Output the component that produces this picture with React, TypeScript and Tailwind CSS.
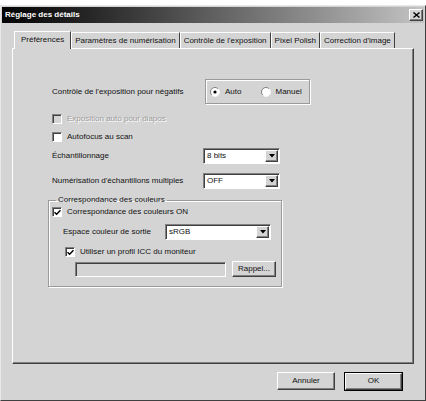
import React from 'react';

const raised =
  'border border-t-white border-l-white border-r-[#404040] border-b-[#404040] shadow-[inset_-1px_-1px_0_#808080]';
const sunken =
  'border border-t-[#808080] border-l-[#808080] border-r-white border-b-white shadow-[inset_1px_1px_0_#404040]';

const CheckBox = ({ checked, disabled }: { checked?: boolean; disabled?: boolean }) => (
  <span
    className={`w-[10px] h-[10px] shrink-0 flex items-center justify-center ${sunken} ${
      disabled ? 'bg-[#d4d4d4]' : 'bg-white'
    }`}
  >
    {checked && (
      <svg width="7" height="7" viewBox="0 0 7 7">
        <path d="M0.5 3.2 L2.6 5.3 L6.5 1.2" stroke="#000" strokeWidth="1.5" fill="none" />
      </svg>
    )}
  </span>
);

const Radio = ({ checked }: { checked?: boolean }) => (
  <svg width="10" height="10" viewBox="0 0 10 10" className="shrink-0">
    <circle cx="5" cy="5" r="4.5" fill="#fff" />
    <path d="M8.2 1.8 A4.5 4.5 0 0 0 1.8 8.2" stroke="#808080" strokeWidth="1" fill="none" />
    <path d="M1.8 8.2 A4.5 4.5 0 0 0 8.2 1.8" stroke="#f4f4f4" strokeWidth="1" fill="none" />
    {checked && <circle cx="5" cy="5" r="1.6" fill="#000" />}
  </svg>
);

const Select = ({ value, width }: { value: string; width: string }) => (
  <div className={`${width} h-[16px] bg-white flex items-center justify-between ${sunken} pl-[3px] pr-[1px]`}>
    <span>{value}</span>
    <span className={`w-[13px] h-[12px] bg-[#d4d4d4] flex items-center justify-center ${raised}`}>
      <svg width="6" height="4" viewBox="0 0 6 4">
        <path d="M0 0 H6 L3 3.5 Z" fill="#000" />
      </svg>
    </span>
  </div>
);

const Button = ({ label, isDefault, className }: { label: string; isDefault?: boolean; className: string }) => (
  <div className={`${className} ${isDefault ? 'outline outline-1 outline-black' : ''} bg-[#d4d4d4]`}>
    <div className={`w-full h-full flex items-center justify-center ${raised}`}>{label}</div>
  </div>
);

const tabs = ['Paramètres de numérisation', "Contrôle de l'exposition", 'Pixel Polish', "Correction d'image"];

export default function App() {
  return (
    <div className="w-[426px] h-[401px] bg-white pt-[5px] font-['Liberation_Sans',Arial,sans-serif] text-[8px] text-[#111] leading-none">
      <div className="h-[396px] bg-[#d4d4d4] border border-t-[#e8e8e8] border-l-[#e8e8e8] border-r-[#404040] border-b-[#404040] p-[1px] flex flex-col">
        <div className="h-[16px] bg-gradient-to-r from-[#050505] via-[#606060] to-[#c4c4c4] flex items-center justify-between pl-[3px] pr-[1px]">
          <span className="text-white font-bold text-[8px]">Réglage des détails</span>
          <span className={`w-[14px] h-[12px] bg-[#d4d4d4] flex items-center justify-center ${raised}`}>
            <svg width="7" height="6" viewBox="0 0 7 6">
              <path d="M0.5 0.5 L6.5 5.5 M6.5 0.5 L0.5 5.5" stroke="#000" strokeWidth="1.4" />
            </svg>
          </span>
        </div>

        <div className="flex items-end h-[25px] pl-[12px]">
          <div className="h-[18px] px-[6px] flex items-center border border-b-0 border-t-white border-l-white border-r-[#404040] bg-[#d4d4d4] relative z-10 -mb-[1px] pb-[1px]">
            Préférences
          </div>
          {tabs.map((t) => (
            <div
              key={t}
              className="h-[16px] px-[3px] flex items-center border border-b-0 border-t-white border-l-white border-r-[#404040]"
            >
              {t}
            </div>
          ))}
        </div>

        <div className="mx-[10px] h-[316px] border border-t-white border-l-white border-r-[#404040] border-b-[#404040] shadow-[inset_-1px_-1px_0_#808080] flex flex-col pl-[39px]">
          <div className="mt-[30px] h-[25px] flex items-center">
            <span className="w-[153px]">Contrôle de l'exposition pour négatifs</span>
            <div className="w-[105px] h-[25px] border border-[#9a9a9a] shadow-[inset_1px_1px_0_#fff,1px_1px_0_#fff] flex items-center pl-[4px]">
              <Radio checked />
              <span className="ml-[5px]">Auto</span>
              <span className="ml-[20px]">
                <Radio />
              </span>
              <span className="ml-[4px]">Manuel</span>
            </div>
          </div>

          <div className="mt-[10px] h-[10px] flex items-center">
            <CheckBox disabled />
            <span className="ml-[5px] text-[#9c9c9c] [text-shadow:1px_1px_0_#fff]">Exposition auto pour diapos</span>
          </div>
          <div className="mt-[8px] h-[10px] flex items-center">
            <CheckBox />
            <span className="ml-[5px]">Autofocus au scan</span>
          </div>

          <div className="mt-[6px] flex items-center">
            <span className="w-[151px]">Échantillonnage</span>
            <Select value="8 bits" width="w-[77px]" />
          </div>
          <div className="mt-[9px] flex items-center">
            <span className="w-[151px]">Numérisation d'échantillons multiples</span>
            <Select value="OFF" width="w-[77px]" />
          </div>

          <fieldset className="mt-[7px] -ml-[4px] w-[234px] h-[91px] border border-[#9a9a9a] shadow-[inset_1px_1px_0_#fff,1px_1px_0_#fff] pl-[3px] pt-[3px] min-w-0">
            <legend className="ml-[4px] px-[2px]">Correspondance des couleurs</legend>
            <div className="h-[10px] flex items-center">
              <CheckBox checked />
              <span className="ml-[5px]">Correspondance des couleurs ON</span>
            </div>
            <div className="mt-[7px] flex items-center pl-[11px]">
              <span className="w-[102px]">Espace couleur de sortie</span>
              <Select value="sRGB" width="w-[106px]" />
            </div>
            <div className="mt-[7px] h-[10px] flex items-center pl-[13px]">
              <CheckBox checked />
              <span className="ml-[5px]">Utiliser un profil ICC du moniteur</span>
            </div>
            <div className="mt-[4px] flex items-center pl-[23px]">
              <div className={`w-[151px] h-[15px] bg-[#d4d4d4] ${sunken}`} />
              <Button label="Rappel..." className="ml-[6px] w-[44px] h-[16px]" />
            </div>
          </fieldset>
        </div>

        <div className="mt-[8px] flex justify-end pr-[22px]">
          <Button label="Annuler" className="w-[58px] h-[18px]" />
          <Button label="OK" isDefault className="ml-[10px] w-[57px] h-[17px] mt-[0.5px]" />
        </div>
      </div>
    </div>
  );
}
